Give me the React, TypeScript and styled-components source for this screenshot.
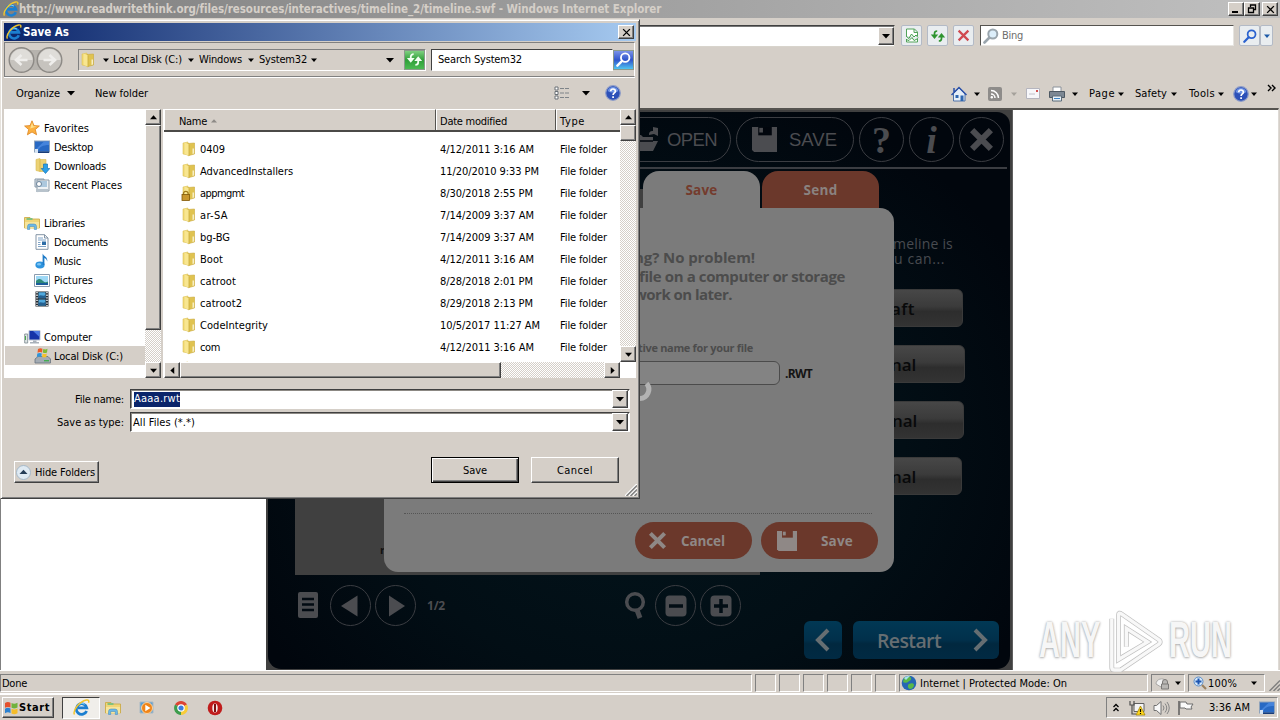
import React, { useLayoutEffect, useRef, useState } from "react";
import styled, { createGlobalStyle, css } from "styled-components";

const FACE = "#d5cfc8";

const GlobalStyle = createGlobalStyle`
  * { box-sizing: border-box; }
  body { margin: 0; overflow: hidden; font: 11px "DejaVu Sans Condensed", "DejaVu Sans", sans-serif; color: #000; }
  svg { display: block; flex: none; }
`;

// Text label that spreads its letters over a fixed width
const LabelBox = styled.span<{ w: number }>`
  display: inline-flex;
  flex: none;
  width: ${p => p.w}px;
  white-space: pre;
`;

const Label: React.FC<{ w: number; children: string }> = ({ w, children }) => {
  const ref = useRef<HTMLSpanElement>(null);
  const [spacing, setSpacing] = useState(0);
  useLayoutEffect(() => {
    if (ref.current) {
      const natural = ref.current.getBoundingClientRect().width - spacing * children.length;
      setSpacing((w - natural) / children.length);
    }
  }, [w, children]);
  return (
    <LabelBox w={w}>
      <span ref={ref} style={{ letterSpacing: spacing }}>{children}</span>
    </LabelBox>
  );
};

// Classic bevels
const raised = css`
  background: ${FACE};
  border: 1px solid;
  border-color: #fff #404040 #404040 #fff;
  box-shadow: inset -1px -1px 0 #808080;
`;

const sunken = css`
  border: 1px solid;
  border-color: #808080 #fff #fff #808080;
`;

const Row = styled.div<{ gap?: number }>`
  display: flex;
  align-items: center;
  gap: ${p => p.gap || 0}px;
`;

const Space = styled.div<{ w?: number; h?: number; grow?: boolean }>`
  flex: ${p => (p.grow ? "1" : "none")};
  width: ${p => p.w || 0}px;
  height: ${p => p.h || 0}px;
`;

const Arrow: React.FC<{ size?: number; color?: string; dir?: string }> = ({ size = 7, color = "#000", dir = "down" }) => {
  const turn: any = { down: 0, left: 90, up: 180, right: 270 };
  return (
    <svg width={size} height={size} viewBox="0 0 8 8">
      <path d="M0 2h8L4 6.5z" fill={color} transform={`rotate(${turn[dir]} 4 4)`} />
    </svg>
  );
};

/* ---------- icons ---------- */

const IeIcon = ({ size = 16 }) => (
  <svg width={size} height={size} viewBox="0 0 16 16">
    <path d="M12.8 11.2A5 5 0 1 1 13 8.4H4.6" fill="none" stroke="#1c7fd0" strokeWidth="2.6" />
    <path d="M5 5.6A4.6 4.6 0 0 1 11 5" fill="none" stroke="#7fd0f7" strokeWidth="1" />
    <path d="M1.4 14.6C-.6 11 6 2.2 12.6 1c2.2-.4 2.6.8 2 2.6" fill="none" stroke="#f2c52c" strokeWidth="1.4" />
  </svg>
);

const FolderIcon = ({ lock = false }) => (
  <svg width="16" height="16" viewBox="0 0 16 16">
    <path d="M2 2l5-1v13l-5-1z" fill="#f0d770" stroke="#dcc25c" strokeWidth=".6" />
    <path d="M7 2.5l6.500-.5v11L7 14.800z" fill="#e0c350" stroke="#c9aa3c" strokeWidth=".6" />
    <path d="M3.500 1.500l4.500 2v11.300l-4.500-2z" fill="#f8e690" />
    <path d="M8 3.500v11.300" stroke="#c8a93a" strokeWidth=".8" />
    <path d="M11.500 7.500H13v5l-1.500.6z" fill="#f7efc4" />
    {lock && <path d="M2.5 10.5V8a2.4 2.4 0 0 1 4.6 0v2.5" fill="none" stroke="#a17a18" strokeWidth="1.3" />}
    {lock && <rect x="1" y="9.5" width="7.5" height="6" fill="#c8962c" stroke="#805808" strokeWidth=".8" />}
  </svg>
);

const StarIcon = () => (
  <svg width="16" height="16" viewBox="0 0 16 16">
    <path d="M8 .8l2 4.8 5.4.4-4.1 3.5 1.3 5.3L8 12l-4.6 2.8 1.3-5.3L.6 6 6 5.6z" fill="#fbb040" stroke="#dd8420" strokeWidth=".8" />
    <path d="M8 2.6l1.3 3.6 3.5.4-6.6 2z" fill="#ffe08a" />
  </svg>
);

const ScreenIcon = () => (
  <svg width="16" height="14" viewBox="0 0 16 14">
    <rect x=".5" y="1" width="15" height="11" fill="#2869c4" stroke="#8fa3bb" />
    <path d="M1 10L10 1.500h5V5C9 5 5 7 4 11z" fill="#4584dc" />
    <path d="M1 11.500h14V13H1z" fill="#183c78" />
    <path d="M1 9h3v4H1z" fill="#d6e4f4" />
  </svg>
);

const DownloadsIcon = () => (
  <svg width="16" height="16" viewBox="0 0 16 16">
    <path d="M2 1.5l4-1v13l-4-1zM6 1.5h6v12H6z" fill="#ecd275" stroke="#d8bb50" strokeWidth=".6" />
    <path d="M9.500 6h4v4.500h2.300L11.500 15.500 7.200 10.500h2.300z" fill="#2ba0e8" stroke="#1473b6" strokeWidth=".7" />
  </svg>
);

const RecentIcon = () => (
  <svg width="16" height="16" viewBox="0 0 16 16">
    <path d="M1 2h9v8H1z" fill="#dce5ec" stroke="#8798a8" />
    <path d="M3 3h12v11l-12 .6z" fill="#eef2f5" stroke="#8b99a5" />
    <path d="M6 5h7M6 7h7M6 9h7" stroke="#6b9ec7" />
    <circle cx="5" cy="7" r="2.500" fill="#fff" stroke="#68829a" />
    <path d="M2 12h12v3H2z" fill="#b8c3cc" />
  </svg>
);

const LibraryIcon = () => (
  <svg width="16" height="16" viewBox="0 0 16 16">
    <path d="M.5 2.500H6l1 1.500h8.500v9H.5z" fill="#f0d678" stroke="#c9a63d" strokeWidth=".8" />
    <path d="M2.500 3h6v2h-6z" fill="#83c07c" />
    <path d="M1 7h14v6.500H1z" fill="#f7e59c" />
    <path d="M3.500 14.500v-3q0-2.500 2.500-2.500h4q2.500 0 2.500 2.500v3h-2.200v-3H5.700v3z" fill="#6db8e6" stroke="#3c87bd" strokeWidth=".5" />
  </svg>
);

const DocumentIcon = () => (
  <svg width="16" height="16" viewBox="0 0 16 16">
    <path d="M2 .7h8.500L14 4v11.300H2z" fill="#fff" stroke="#8394a6" />
    <path d="M4 4h5M4 6h8M4 12.500h8" stroke="#7fa3c7" />
    <path d="M4 8.500h2.500M4 10.500h2.500" stroke="#7fa3c7" />
    <path d="M8 7.500h4v3.500H8z" fill="#2c6ca6" />
    <path d="M10.500.7V4H14" fill="none" stroke="#8394a6" />
  </svg>
);

const MusicIcon = () => (
  <svg width="16" height="16" viewBox="0 0 16 16">
    <ellipse cx="6" cy="12" rx="4.600" ry="3.400" fill="#2e94de" />
    <ellipse cx="5" cy="11.300" rx="2" ry="1.300" fill="#7cc5f4" />
    <path d="M8.600 12V.6c1 3 5.400 2.800 4.600 8C12.600 6 11.600 5.500 10.400 5v7z" fill="#1f7bc8" />
  </svg>
);

const PictureIcon = () => (
  <svg width="16" height="13" viewBox="0 0 16 13">
    <path d="M.5.5h15v12H.5z" fill="#fff" stroke="#8b9caf" />
    <path d="M2 2h12v9H2z" fill="#9ed8f6" />
    <path d="M2 7c3-3 5-2 7 0s4 1 5 .5V9H2z" fill="#2f8a78" />
    <path d="M2 9h12v2H2z" fill="#1c5d9c" />
  </svg>
);

const VideoIcon = () => (
  <svg width="16" height="16" viewBox="0 0 16 16">
    <path d="M1.500.5h13v15h-13z" fill="#242a30" />
    <path d="M4.500 1.200h7v6h-7zM4.500 8.500h7v6h-7z" fill="#4fa8dc" />
    <path d="M4.500 5c3-2 4 1 7-1v3.200h-7zM4.500 12c3-2 4 1 7-1v3.500h-7z" fill="#246090" />
    <path d="M3 1v14M13 1v14" stroke="#fff" strokeWidth="1.400" strokeDasharray="1.300 1.300" />
  </svg>
);

const ComputerIcon = () => (
  <svg width="17" height="16" viewBox="0 0 17 16">
    <path d="M.7 5h3v9h-3z" fill="#dfe5e5" stroke="#77858c" strokeWidth=".8" />
    <path d="M1.500 7v4" stroke="#49a84e" />
    <path d="M5 1.500h11v9.500H5z" fill="#1533a8" stroke="#bac4d3" />
    <path d="M9 2h6.500v6z" fill="#4c79e4" />
    <path d="M9 11.500h3.500V13H15v1.500H6V13h3z" fill="#a9b1ba" />
  </svg>
);

const DiskIcon = () => (
  <svg width="17" height="16" viewBox="0 0 17 16">
    <path d="M1 11l3-2.500h10l2.500 2.500v4H1z" fill="#a3abb3" stroke="#68727d" strokeWidth=".8" />
    <path d="M10 12.700h5" stroke="#42ad52" strokeWidth="1.400" />
    <path d="M4 1c2-1.200 3-1 4.500-.2L8 4.500c-1.400-.8-2.600-.7-4.500.2z" fill="#ea5b28" />
    <path d="M9.300 1c1.600.7 2.600.6 4.200-.2L13 4.500c-1.500.7-2.700.7-4.200 0z" fill="#7fba36" />
    <path d="M3.300 5.500c1.700-.8 3-.8 4.500 0L7.300 9c-1.500-.6-2.800-.6-4.500.1z" fill="#2f94d8" />
    <path d="M8.600 5.500c1.500.7 2.700.7 4.200 0l-.5 3.600c-1.400.6-2.700.6-4.200 0z" fill="#f6c02a" />
  </svg>
);

const HelpIcon = ({ size = 16 }) => (
  <svg width={size} height={size} viewBox="0 0 16 16">
    <circle cx="8" cy="8" r="7.300" fill="#2c50b8" stroke="#8d9cc8" strokeWidth="1.200" />
    <path d="M2.600 6a5.600 5.600 0 0 1 10.800 0C10 8 6 8 2.600 6z" fill="#6f94e4" />
    <path d="M5.700 6.200c.2-3 4.800-2.800 4.700 0C10.300 8 8.100 7.900 8.100 10M8.100 11.300v1.600" fill="none" stroke="#fff" strokeWidth="1.700" />
  </svg>
);

const LensIcon: React.FC<{ size?: number; color: string; glass?: string }> = ({ size = 16, color, glass = "none" }) => (
  <svg width={size} height={size} viewBox="0 0 16 16">
    <path d="M1.500 14.500L6.500 9.500" stroke={color} strokeWidth="2.600" strokeLinecap="round" />
    <circle cx="9.800" cy="6" r="4.500" fill={glass} stroke={color} strokeWidth="2" />
  </svg>
);

const SwapArrows = ({ size = 16, color = "#2f9430" }) => (
  <svg width={size} height={size} viewBox="0 0 16 16">
    <path d="M.8 6.500h7.400L4.500 11z" fill={color} />
    <path d="M4.500 7.500V5.500C4.500 4 5.500 3 7.200 3" fill="none" stroke={color} strokeWidth="1.700" />
    <path d="M7.800 9.500h7.400L11.500 5z" fill={color} />
    <path d="M11.500 8.500v2c0 1.500-1 2.500-2.700 2.500" fill="none" stroke={color} strokeWidth="1.700" />
  </svg>
);

const TornPage = () => (
  <svg width="14" height="15" viewBox="0 0 14 15">
    <path d="M1.500 8V1h8l3 3v4M1.500 11v3h11v-3M9 1v3.500h3.500" fill="#fff" stroke="#52a35a" />
    <path d="M1 8l3 2.500L6.500 6 9 9l2-2 2 2.500M1 11.500l3 1 3-3 2 3 4-2" fill="none" stroke="#41a04c" />
  </svg>
);

const FloppyIcon: React.FC<{ size: number; color: string; hole: string }> = ({ size, color, hole }) => (
  <svg width={size} height={size} viewBox="0 0 24 24">
    <path d="M0 0h24v24H2l-2-2z" fill={color} />
    <path d="M6 0h13v8H6z" fill={hole} />
    <path d="M7 .8h3.500v4.500H7z" fill={color} />
  </svg>
);

const CrossIcon: React.FC<{ size: number; color: string; width: number }> = ({ size, color, width }) => (
  <svg width={size} height={size} viewBox="0 0 20 20">
    <path d="M2.500 2.500l15 15M17.500 2.500l-15 15" stroke={color} strokeWidth={width} />
  </svg>
);

/* ---------- browser window ---------- */

const Desktop = styled.div`
  position: relative;
  display: flex;
  flex-direction: column;
  width: 1280px;
  height: 720px;
  overflow: hidden;
  background: ${FACE};
`;

const BrowserTitle = styled(Row)`
  height: 18px;
  padding: 0 2px 0 3px;
  background: linear-gradient(90deg, #808080, #c0c0c0);
  color: ${FACE};
  font: bold 11.5px "DejaVu Sans Condensed", "DejaVu Sans", sans-serif;
`;

const CaptionButton = styled.div`
  ${raised}
  width: 16px;
  height: 14px;
  display: flex;
  align-items: center;
  justify-content: center;
`;

const NavBar = styled(Row)`
  height: 35px;
`;

const AddressBox = styled.div`
  display: flex;
  flex: none;
  justify-content: flex-end;
  width: 895px;
  height: 22px;
  background: #fff;
  border: 1px solid;
  border-color: #404040 #d8d4cc #d8d4cc #808080;
  box-shadow: inset 0 1px 0 #777;
  padding: 1px 0;
`;

const DropButton = styled.div`
  ${raised}
  width: 16px;
  display: flex;
  align-items: center;
  justify-content: center;
`;

const ToolButton = styled.div<{ w: number }>`
  flex: none;
  width: ${p => p.w}px;
  height: 21px;
  display: flex;
  align-items: center;
  justify-content: center;
  background: #e9edf0;
  border: 1px solid #b3bac6;
  border-radius: 2px;
`;

const BingBox = styled(Row)`
  flex: none;
  width: 254px;
  height: 21px;
  padding-left: 2px;
  background: #fff;
  color: #6d6d6d;
  border: 1px solid;
  border-color: #55534f #e6e4e0 #e6e4e0 #55534f;
`;

const CommandBar = styled(Row)`
  height: 55px;
  padding: 26px 3px 0 951px;
`;

const PageArea = styled.div`
  height: 562px;
  margin-right: 1px;
  padding-left: 265px;
  background: #fff;
  border-top: 2px solid #55534f;
  border-left: 1px solid #808080;
  border-right: 1px solid #dedad5;
`;

const StatusBar = styled.div`
  display: flex;
  gap: 3px;
  height: 24px;
  padding: 3px 0 1px;
  border-top: 1px solid #fff;
  border-bottom: 1px solid #fff;
`;

const StatusCell = styled.div<{ w: number }>`
  ${sunken}
  display: flex;
  align-items: center;
  width: ${p => p.w}px;
  padding-left: 1px;
  overflow: hidden;
`;

const Taskbar = styled(Row)`
  height: 26px;
  padding: 0 2px;
  border-top: 1px solid #fff;
`;

const StartButton = styled(Row)`
  ${raised}
  width: 52px;
  height: 21px;
  padding-left: 1px;
  font-weight: bold;
`;

const ActiveTask = styled.div`
  display: flex;
  align-items: center;
  justify-content: center;
  width: 38px;
  height: 22px;
  background: #f0eeea;
  border: 1px solid;
  border-color: #404040 #fff #fff #404040;
`;

const Tray = styled(Row)`
  ${sunken}
  width: 172px;
  height: 21px;
  padding-left: 5px;
`;

/* ---------- timeline app inside the page ---------- */

const LINE = "#3b3d42";

const Stage = styled.div`
  position: relative;
  width: 747px;
  height: 560px;
  padding: 2px 2px 1px;
  background: #404040;
  border-right: 1px solid #5e5e5e;
`;

const AppBody = styled.div`
  display: flex;
  flex-direction: column;
  height: 557px;
  border-radius: 13px;
  background: radial-gradient(ellipse 480px 420px at 50% 60%, #03151c 0%, #020e15 55%, #01060d 90%);
`;

const AppHeader = styled(Row)`
  justify-content: flex-end;
  gap: 5px;
  height: 57px;
  margin-right: 3px;
  padding: 0 3px 0 0;
  border-bottom: 2px solid ${LINE};
  color: #4b4c50;
  font: 18.5px "Liberation Sans", sans-serif;
`;

const Pill = styled(Row)<{ w: number }>`
  width: ${p => p.w}px;
  height: 45px;
  border: 1.5px solid ${LINE};
  border-radius: 23px;
`;

const Round = styled.div<{ size: number }>`
  display: flex;
  flex: none;
  align-items: center;
  justify-content: center;
  width: ${p => p.size}px;
  height: ${p => p.size}px;
  border: 1.5px solid ${LINE};
  border-radius: 50%;
  color: #4b4c50;
  font: bold 38px "Liberation Serif", serif;
`;

const Workspace = styled.div`
  display: flex;
  justify-content: space-between;
  flex: 1;
  padding: 20px 45px 0 27px;
`;

const Preview = styled.div`
  display: flex;
  align-items: flex-end;
  width: 465px;
  padding: 0 0 18px 85px;
  background: #404040;
  color: #111;
  font: bold 11px "Open Sans", sans-serif;
`;

const SidePanel = styled.div`
  display: flex;
  flex-direction: column;
  width: 170px;
  padding-top: 47px;
  color: #484b50;
  font: 14px/15px "Open Sans", sans-serif;
`;

const SideLine = styled.div<{ end: number }>`
  display: flex;
  justify-content: flex-end;
  padding-right: ${p => p.end}px;
`;

const Choice = styled.div<{ end: number; pad: number }>`
  display: flex;
  align-items: center;
  justify-content: flex-end;
  height: 38px;
  margin: 0 ${p => p.end}px 18px 0;
  padding-right: ${p => p.pad}px;
  border-radius: 6px;
  background: linear-gradient(#474747, #3b3b3b 45%, #2d2d2d 60%, #333);
  border: 1px solid #3a3a3a;
  color: #08090a;
  font: 600 17px "Open Sans", sans-serif;
`;

const AppFooter = styled.div`
  display: flex;
  align-items: flex-start;
  height: 94px;
  padding: 10px 11px 0 29px;
  color: #4b4c50;
`;

const PageCount = styled.div`
  padding-top: 12px;
  font: bold 12px "Open Sans", sans-serif;
`;

const BlueButton = styled.div<{ w: number }>`
  display: flex;
  align-items: center;
  width: ${p => p.w}px;
  height: 38px;
  margin-top: 36px;
  border-radius: 6px;
  background: linear-gradient(#013854, #01304b 50%, #01283f 60%, #012a43);
  color: #666e72;
  font: 600 19.5px "Open Sans", sans-serif;
`;

const Tabs = styled.div`
  position: absolute;
  left: 377px;
  top: 61px;
  display: flex;
  gap: 2px;
`;

const Tab = styled.div<{ active?: boolean }>`
  display: flex;
  align-items: center;
  justify-content: center;
  width: 117px;
  height: 38px;
  border-radius: 16px 16px 0 0;
  background: ${p => (p.active ? "#7b7b7b" : "#6b382b")};
  color: ${p => (p.active ? "#743b2d" : "#8a8280")};
  font: bold 13.5px "Open Sans", sans-serif;
`;

const Modal = styled.div`
  position: absolute;
  left: 118px;
  top: 98px;
  width: 510px;
  height: 364px;
  padding-top: 40px;
  border-radius: 14px;
  background: #7b7b7b;
  color: #4c4c4c;
  font: bold 15px "Open Sans", sans-serif;
`;

const ModalLine = styled.div<{ end: number }>`
  display: flex;
  align-items: center;
  justify-content: flex-end;
  height: 18.5px;
  padding-right: ${p => p.end}px;
`;

const FileHint = styled.div`
  display: flex;
  align-items: center;
  justify-content: flex-end;
  height: 21px;
  margin: 34px 0 2.5px;
  padding: 0 141px 1px 0;
  font-size: 11px;
`;

const NameField = styled(Row)`
  gap: 5px;
  margin-left: 140px;
  height: 24px;
  color: #141414;
  font: bold 12px "Open Sans", sans-serif;
`;

const NameInput = styled.div`
  width: 256px;
  height: 24px;
  background: #838383;
  border: 1.5px solid #4b4b4b;
  border-radius: 6px;
`;

const DottedRule = styled.div`
  margin: 128px 22px 8px 20px;
  border-top: 1.5px dotted #555;
`;

const ModalButtons = styled(Row)`
  justify-content: flex-end;
  gap: 9px;
  padding-right: 16px;
`;

const OrangeButton = styled(Row)`
  width: 117px;
  height: 37px;
  border-radius: 19px;
  background: #6b382b;
  color: #8f8886;
  font: bold 13.5px "Open Sans", sans-serif;
`;

const Spinner = styled.svg`
  position: absolute;
  left: 360px;
  top: 266px;
`;

/* ---------- save dialog ---------- */

const Dialog = styled.div`
  position: absolute;
  left: 0;
  top: 19px;
  width: 640px;
  height: 480px;
  padding: 3px 3px 0;
  background: ${FACE};
  border: 1px solid;
  border-color: #e6e2dc #404040 #404040 #e6e2dc;
  box-shadow: inset 1px 1px 0 #fff, inset -1px -1px 0 #808080;
`;

const DialogTitle = styled(Row)`
  height: 18px;
  padding: 0 2px;
  background: linear-gradient(90deg, #0a246a, #a6caf0);
  color: #fff;
  font-weight: bold;
  font-size: 11.5px;
`;

const DialogNav = styled(Row)`
  height: 35px;
  margin: 1px 1px 0 0;
  padding: 0 0 0 3px;
  border: 1px solid;
  border-color: #808080 #fff #808080 #808080;
  box-shadow: 0 1px 0 #fff;
`;

const Crumbs = styled(Row)`
  ${sunken}
  flex: none;
  width: 348px;
  height: 22px;
  padding-left: 1px;
`;

const SearchField = styled(Row)`
  flex: none;
  width: 182px;
  height: 22px;
  padding-left: 6px;
  background: #fff;
  border: 1px solid;
  border-color: #404040 #fff #fff #404040;
`;

const GlossButton = styled.div<{ color: string }>`
  flex: none;
  display: flex;
  align-items: center;
  justify-content: center;
  width: 21px;
  height: 20px;
  border: 1px solid #8a9a8a;
  background: ${p => p.color};
`;

const DialogTools = styled(Row)`
  height: 32px;
  padding-left: 12px;
`;

const Explorer = styled.div`
  display: flex;
  height: 269px;
`;

const Tree = styled.div`
  width: 141px;
  padding-top: 9px;
  background: #fff;
`;

const TreeItem = styled(Row)<{ depth: number; selected?: boolean }>`
  height: 19px;
  margin-left: 1px;
  padding-top: 1px;
  padding-left: ${p => (p.depth ? 29 : 19)}px;
  gap: ${p => (p.depth ? 4 : 4)}px;
  background: ${p => (p.selected ? FACE : "transparent")};
`;

const IconSlot = styled.div`
  display: flex;
  justify-content: center;
  width: 16px;
`;

const checker = css`
  background: repeating-conic-gradient(#d5cfc8 0 25%, #fff 0 50%) 0 0 / 2px 2px;
`;

const VScroll = styled.div`
  ${checker}
  display: flex;
  flex-direction: column;
  justify-content: space-between;
  width: 16px;
`;

const HScroll = styled.div`
  ${checker}
  display: flex;
  justify-content: space-between;
  height: 16px;
  width: 456px;
`;

const ScrollBox = styled.div<{ w?: number; h?: number }>`
  ${raised}
  display: flex;
  flex: none;
  align-items: center;
  justify-content: center;
  width: ${p => p.w || 16}px;
  height: ${p => p.h || 16}px;
`;

const Splitter = styled.div`
  width: 3px;
  border-right: 1px solid #fff;
`;

const ListPane = styled.div`
  width: 472px;
  background: #fff;
`;

const ListTop = styled.div`
  display: flex;
  height: 253px;
`;

const ListTable = styled.div`
  width: 456px;
  overflow: hidden;
`;

const ListHeader = styled.div`
  display: flex;
  height: 23px;
  margin-bottom: 6px;
  background: ${FACE};
  border-bottom: 2px solid #4b4a47;
`;

const HeaderCell = styled(Row)<{ w: number; pad: number }>`
  flex: none;
  width: ${p => p.w}px;
  padding-top: 2px;
  padding-left: ${p => p.pad}px;
  border-top: 1px solid #fff;
  border-left: 1px solid #fff;
  border-right: 1px solid #55534f;
`;

const FileRow = styled(Row)`
  height: 22px;
  padding-left: 17px;
`;

const NameCell = styled(Row)`
  gap: 3px;
  width: 259px;
`;

const DateCell = styled.div`
  width: 120px;
`;

const FieldRow = styled(Row)`
  justify-content: flex-end;
  height: 20px;
  margin: 0 6px 3px 0;
`;

const ComboBox = styled.div<{ pad: number }>`
  display: flex;
  flex: none;
  align-items: center;
  justify-content: space-between;
  width: 500px;
  height: 20px;
  padding-left: ${p => p.pad}px;
  padding-right: 1px;
  background: #fff;
  border: 1px solid;
  border-color: #404040 #fff #fff #404040;
  box-shadow: inset 1px 1px 0 #8c8984;
`;

const ComboDrop = styled(DropButton)`
  height: 18px;
`;

const Selection = styled.div`
  height: 15px;
  line-height: 14px;
  background: #0a246a;
  color: #fff;
`;

const DialogFooter = styled(Row)`
  align-items: flex-start;
  padding: 22px 17px 0 10px;
`;

const HideButton = styled(Row)`
  ${raised}
  width: 85px;
  height: 22px;
  margin-top: 4px;
  padding-left: 1px;
  gap: 4px;
`;

const DialogButton = styled.div<{ primary?: boolean }>`
  ${raised}
  display: flex;
  align-items: center;
  justify-content: center;
  width: 88px;
  height: 26px;
  ${p => p.primary && css`
    border-color: #000;
    box-shadow: inset 1px 1px 0 #fff, inset -1px -1px 0 #404040, inset -2px -2px 0 #808080;
  `}
`;

const Grip = styled.svg`
  position: absolute;
  right: 2px;
  bottom: 2px;
`;

const Watermark = styled.div`
  position: absolute;
  left: 1039px;
  top: 609px;
  display: flex;
  align-items: center;
  height: 63px;
  opacity: 0.9;
`;

const MarkText = styled.div`
  width: 67px;
  color: #f6f6f6;
  font: bold 50px/63px "Liberation Sans", sans-serif;
  text-shadow: 0 0 3px #9a9a9a, 0 1px 3px #bbb;

  span {
    display: inline-block;
    transform: scaleX(0.58);
    transform-origin: 0 50%;
  }
`;

/* ---------- data ---------- */

const treeItems: any[] = [
  { name: "Favorites", w: 45, icon: <StarIcon />, depth: 0 },
  { name: "Desktop", w: 39, icon: <ScreenIcon />, depth: 1 },
  { name: "Downloads", w: 52, icon: <DownloadsIcon />, depth: 1 },
  { name: "Recent Places", w: 68, icon: <RecentIcon />, depth: 1 },
  null,
  { name: "Libraries", w: 41, icon: <LibraryIcon />, depth: 0 },
  { name: "Documents", w: 54, icon: <DocumentIcon />, depth: 1 },
  { name: "Music", w: 27, icon: <MusicIcon />, depth: 1 },
  { name: "Pictures", w: 39, icon: <PictureIcon />, depth: 1 },
  { name: "Videos", w: 32, icon: <VideoIcon />, depth: 1 },
  null,
  { name: "Computer", w: 48, icon: <ComputerIcon />, depth: 0 },
  { name: "Local Disk (C:)", w: 69, icon: <DiskIcon />, depth: 1, selected: true },
];

const files = [
  { name: "0409", w: 25, date: "4/12/2011 3:16 AM", dw: 94 },
  { name: "AdvancedInstallers", w: 93, date: "11/20/2010 9:33 PM", dw: 99 },
  { name: "appmgmt", w: 44, date: "8/30/2018 2:55 PM", dw: 93, lock: true },
  { name: "ar-SA", w: 28, date: "7/14/2009 3:37 AM", dw: 94 },
  { name: "bg-BG", w: 30, date: "7/14/2009 3:37 AM", dw: 94 },
  { name: "Boot", w: 23, date: "4/12/2011 3:16 AM", dw: 94 },
  { name: "catroot", w: 36, date: "8/28/2018 2:01 PM", dw: 93 },
  { name: "catroot2", w: 42, date: "8/29/2018 2:13 PM", dw: 93 },
  { name: "CodeIntegrity", w: 68, date: "10/5/2017 11:27 AM", dw: 100 },
  { name: "com", w: 20, date: "4/12/2011 3:16 AM", dw: 94 },
];

const choices = [
  { text: "aft", w: 24, end: 2, pad: 47 },
  { text: "nal", w: 25, end: 0, pad: 48 },
  { text: "nal", w: 25, end: 1, pad: 46 },
  { text: "nal", w: 25, end: 3, pad: 45 },
];

/* ---------- parts ---------- */

const TimelineApp = () => (
  <Stage>
    <AppBody>
      <AppHeader>
        <Pill w={117}>
          <Space w={20} />
          <svg width="24" height="26" viewBox="0 0 24 26">
            <path d="M0 24V8h6l2 2h10v4h5l-5 10z" fill="#4b4c50" />
            <path d="M3 14h15" stroke="#01060d" strokeWidth="1.500" />
            <path d="M14 8c0-3 1-4 4-4V0l5 1v8l-4-2z" fill="#4b4c50" />
          </svg>
          <Space w={8} />
          <Label w={50}>OPEN</Label>
        </Pill>
        <Pill w={118}>
          <Space w={15} />
          <FloppyIcon size={25} color="#4b4c50" hole="#01060d" />
          <Space w={12} />
          <Label w={48}>SAVE</Label>
        </Pill>
        <Round size={45}>?</Round>
        <Round size={45}><i>i</i></Round>
        <Round size={45}><CrossIcon size={25} color="#4b4c50" width={4.8} /></Round>
      </AppHeader>
      <Workspace>
        <Preview>r</Preview>
        <SidePanel>
          <SideLine end={12}><Label w={60}>meline is</Label></SideLine>
          <SideLine end={20}><Label w={51}>u can...</Label></SideLine>
          <Space h={23} />
          {choices.map((item, i) => (
            <Choice key={i} end={item.end} pad={item.pad}>
              <Label w={item.w}>{item.text}</Label>
            </Choice>
          ))}
        </SidePanel>
      </Workspace>
      <AppFooter>
        <svg width="22" height="40" viewBox="0 0 22 40">
          <rect x="1" y="7" width="20" height="26" rx="2" fill="#4b4c50" />
          <path d="M5 14h12M5 19.500h12M5 25h12" stroke="#020a12" strokeWidth="2.300" />
        </svg>
        <Space w={11} />
        <Round size={41}>
          <svg width="20" height="24" viewBox="0 0 20 24"><path d="M0 12L16.500 1.500v21z" fill="#4b4c50" /></svg>
        </Round>
        <Space w={4} />
        <Round size={41}>
          <svg width="20" height="24" viewBox="0 0 20 24"><path d="M19 12L3 1.500v21z" fill="#4b4c50" /></svg>
        </Round>
        <Space w={11} />
        <PageCount><Label w={18}>1/2</Label></PageCount>
        <Space w={179} />
        <svg width="22" height="40" viewBox="0 0 22 40">
          <circle cx="11" cy="17" r="8.300" fill="none" stroke="#4b4c50" strokeWidth="3.500" />
          <path d="M13 25l3 8" stroke="#4b4c50" strokeWidth="5" />
        </svg>
        <Space w={9} />
        <Round size={41}>
          <svg width="22" height="22" viewBox="0 0 22 22">
            <rect x=".5" y=".5" width="21" height="21" rx="4" fill="#4b4c50" />
            <path d="M4 11h14" stroke="#020d14" strokeWidth="3.500" />
          </svg>
        </Round>
        <Space w={4} />
        <Round size={41}>
          <svg width="22" height="22" viewBox="0 0 22 22">
            <rect x=".5" y=".5" width="21" height="21" rx="4" fill="#4b4c50" />
            <path d="M4 11h14M11 4v14" stroke="#020d14" strokeWidth="3.500" />
          </svg>
        </Round>
        <Space grow />
        <BlueButton w={38}>
          <Space w={10} />
          <svg width="18" height="24" viewBox="0 0 18 24"><path d="M14 2L4 12l10 10" fill="none" stroke="#666e72" strokeWidth="4" /></svg>
        </BlueButton>
        <Space w={11} />
        <BlueButton w={146}>
          <Space w={24} />
          <Label w={64}>Restart</Label>
          <Space w={31} />
          <svg width="18" height="24" viewBox="0 0 18 24"><path d="M3 2l10 10L3 22" fill="none" stroke="#666e72" strokeWidth="4" /></svg>
        </BlueButton>
      </AppFooter>
    </AppBody>
    <Tabs>
      <Tab active><Label w={32}>Save</Label></Tab>
      <Tab><Label w={34}>Send</Label></Tab>
    </Tabs>
    <Modal>
      <ModalLine end={139}><Label w={121}>ng? No problem!</Label></ModalLine>
      <ModalLine end={49}><Label w={206}>file on a computer or storage</Label></ModalLine>
      <ModalLine end={162}><Label w={98}>work on later.</Label></ModalLine>
      <FileHint><Label w={115}>tive name for your file</Label></FileHint>
      <NameField>
        <NameInput />
        <Label w={27}>.RWT</Label>
      </NameField>
      <DottedRule />
      <ModalButtons>
        <OrangeButton>
          <Space w={13} />
          <CrossIcon size={19} color="#8f8886" width={4.2} />
          <Space w={14} />
          <Label w={44}>Cancel</Label>
        </OrangeButton>
        <OrangeButton>
          <Space w={16} />
          <FloppyIcon size={20} color="#8f8886" hole="#6b382b" />
          <Space w={24} />
          <Label w={32}>Save</Label>
        </OrangeButton>
      </ModalButtons>
    </Modal>
    <Spinner width="28" height="28" viewBox="0 0 28 28">
      <path d="M20.500 7.500A9 9 0 0 1 14 22.500" fill="none" stroke="#b3b3b3" strokeWidth="5" />
    </Spinner>
  </Stage>
);

const SaveDialog = () => (
  <Dialog>
    <DialogTitle>
      <IeIcon />
      <Space w={1} />
      <Label w={46}>Save As</Label>
      <Space grow />
      <CaptionButton><CrossIcon size={9} color="#000" width={3} /></CaptionButton>
    </DialogTitle>
    <DialogNav>
      <svg width="56" height="28" viewBox="0 0 56 28">
        <path d="M13 4h29v20H13z" fill="#b6b3ae" />
        <circle cx="13.500" cy="14" r="12.300" fill="#c6c3be" stroke="#8d8a86" strokeWidth="1.400" />
        <circle cx="41.500" cy="14" r="12.300" fill="#c6c3be" stroke="#8d8a86" strokeWidth="1.400" />
        <path d="M2.500 14a11 11 0 0 1 22 0zM30.500 14a11 11 0 0 1 22 0z" fill="#dfddd9" />
        <path d="M19.500 14H8.500M13.500 9L8 14l5.500 5M35.500 14h11M41.500 9l5.500 5-5.500 5" fill="none" stroke="#efeeec" strokeWidth="2.600" />
      </svg>
      <Space w={14} />
      <Crumbs>
        <FolderIcon />
        <Space w={7} />
        <Arrow size={6} /><Space w={4} />
        <Label w={69}>Local Disk (C:)</Label>
        <Space w={6} /><Arrow size={6} /><Space w={5} />
        <Label w={43}>Windows</Label>
        <Space w={6} /><Arrow size={6} /><Space w={5} />
        <Label w={48}>System32</Label>
        <Space w={4} /><Arrow size={6} />
        <Space grow />
        <Arrow size={8} />
        <Space w={10} />
        <GlossButton color="linear-gradient(#7fd080, #2f9f38 50%, #4cbb52)"><SwapArrows size={17} color="#f2fff2" /></GlossButton>
      </Crumbs>
      <Space w={5} />
      <SearchField><Label w={84}>Search System32</Label></SearchField>
      <GlossButton color="linear-gradient(#7a92e8, #2f55cc 50%, #4fc4f0)"><LensIcon size={15} color="#fff" /></GlossButton>
    </DialogNav>
    <DialogTools>
      <Label w={44}>Organize</Label>
      <Space w={7} /><Arrow size={8} />
      <Space w={20} />
      <Label w={53}>New folder</Label>
      <Space w={406} />
      <svg width="16" height="14" viewBox="0 0 16 14">
        <path d="M1 1h3v3H1zM1 5.500h3v3H1zM1 10h3v3H1z" fill="#fff" stroke="#6a7077" />
        <path d="M6 2.500h10M6 7h10M6 11.500h10" stroke="#7e8489" strokeDasharray="4 1" />
      </svg>
      <Space w={12} /><Arrow size={8} />
      <Space w={15} />
      <HelpIcon size={16} />
    </DialogTools>
    <Explorer>
      <Tree>
        {treeItems.map((item, i) =>
          item ? (
            <TreeItem key={i} depth={item.depth} selected={item.selected}>
              <IconSlot>{item.icon}</IconSlot>
              <Label w={item.w}>{item.name}</Label>
            </TreeItem>
          ) : (
            <TreeItem key={i} depth={0} />
          )
        )}
      </Tree>
      <VScroll>
        <div>
          <ScrollBox><Arrow dir="up" /></ScrollBox>
          <ScrollBox h={205} />
        </div>
        <ScrollBox><Arrow /></ScrollBox>
      </VScroll>
      <Splitter />
      <ListPane>
        <ListTop>
          <ListTable>
            <ListHeader>
              <HeaderCell w={272} pad={14}>
                <Label w={28}>Name</Label>
                <Space w={4} />
                <Arrow size={6} dir="up" color="#8d8a86" />
              </HeaderCell>
              <HeaderCell w={120} pad={3}><Label w={67}>Date modified</Label></HeaderCell>
              <HeaderCell w={90} pad={3}><Label w={25}>Type</Label></HeaderCell>
            </ListHeader>
            {files.map(file => (
              <FileRow key={file.name}>
                <NameCell>
                  <FolderIcon lock={file.lock} />
                  <Label w={file.w}>{file.name}</Label>
                </NameCell>
                <DateCell><Label w={file.dw}>{file.date}</Label></DateCell>
                <Label w={47}>File folder</Label>
              </FileRow>
            ))}
            <FileRow><FolderIcon /></FileRow>
          </ListTable>
          <VScroll>
            <div>
              <ScrollBox><Arrow dir="up" /></ScrollBox>
              <ScrollBox />
            </div>
            <ScrollBox><Arrow /></ScrollBox>
          </VScroll>
        </ListTop>
        <HScroll>
          <Row>
            <ScrollBox><Arrow dir="left" /></ScrollBox>
            <ScrollBox w={321} />
          </Row>
          <ScrollBox><Arrow dir="right" /></ScrollBox>
        </HScroll>
      </ListPane>
    </Explorer>
    <Space h={11} />
    <FieldRow>
      <Label w={49}>File name:</Label>
      <Space w={6} />
      <ComboBox pad={3}>
        <Selection><Label w={46}>Aaaa.rwt</Label></Selection>
        <ComboDrop><Arrow size={8} /></ComboDrop>
      </ComboBox>
    </FieldRow>
    <FieldRow>
      <Label w={67}>Save as type:</Label>
      <Space w={6} />
      <ComboBox pad={2}>
        <Label w={62}>All Files (*.*)</Label>
        <ComboDrop><Arrow size={8} /></ComboDrop>
      </ComboBox>
    </FieldRow>
    <DialogFooter>
      <HideButton>
        <svg width="15" height="15" viewBox="0 0 15 15">
          <circle cx="7.500" cy="7.500" r="7" fill="#dfeaf3" stroke="#a5b8c8" />
          <path d="M3.500 9L7.500 4.800 11.500 9z" fill="#243d57" />
        </svg>
        <Label w={60}>Hide Folders</Label>
      </HideButton>
      <Space grow />
      <DialogButton primary><Label w={24}>Save</Label></DialogButton>
      <Space w={12} />
      <DialogButton><Label w={36}>Cancel</Label></DialogButton>
    </DialogFooter>
    <Grip width="12" height="12" viewBox="0 0 12 12">
      <path d="M0 12L12 0M4 12L12 4M8 12L12 8" stroke="#fff" strokeWidth="1.500" />
      <path d="M1.500 12L12 1.500M5.500 12L12 5.500M9.500 12L12 9.500" stroke="#808080" strokeWidth="1.500" />
    </Grip>
  </Dialog>
);

const App: React.FC = () => (
  <Desktop>
    <GlobalStyle />
    <BrowserTitle>
      <IeIcon />
      <Label w={642}>http://www.readwritethink.org/files/resources/interactives/timeline_2/timeline.swf - Windows Internet Explorer</Label>
      <Space grow />
      <CaptionButton><svg width="8" height="8"><path d="M0 7h6" stroke="#000" strokeWidth="2" /></svg></CaptionButton>
      <CaptionButton>
        <svg width="10" height="10"><path d="M3.500 3V1h5v4.500H7M1.500 4h5v4.500h-5z" fill="none" stroke="#000" strokeWidth="1.300" /></svg>
      </CaptionButton>
      <Space w={2} />
      <CaptionButton><CrossIcon size={9} color="#000" width={3} /></CaptionButton>
    </BrowserTitle>
    <NavBar>
      <AddressBox><DropButton><Arrow size={8} /></DropButton></AddressBox>
      <Space w={6} />
      <ToolButton w={21}><TornPage /></ToolButton>
      <Space w={5} />
      <ToolButton w={21}><SwapArrows /></ToolButton>
      <Space w={5} />
      <ToolButton w={21}><CrossIcon size={13} color="#d04a50" width={3.4} /></ToolButton>
      <Space w={6} />
      <BingBox>
        <LensIcon size={16} color="#9aa5ad" glass="#dceefa" />
        <Space w={3} />
        <Label w={21}>Bing</Label>
      </BingBox>
      <Space w={5} />
      <ToolButton w={21}><LensIcon size={14} color="#2b62cf" /></ToolButton>
      <ToolButton w={13}><Arrow size={6} color="#1d5aa8" /></ToolButton>
    </NavBar>
    <CommandBar>
      <svg width="16" height="16" viewBox="0 0 16 16">
        <path d="M2.500 7.500L8 2l6 6v7H2.500z" fill="#e5eef8" stroke="#5072a8" />
        <path d="M.5 9L8 1.500 15.500 9M3 2v4" fill="none" stroke="#2950a8" strokeWidth="1.500" />
        <path d="M4.500 9h3v3h-3zM9.500 9.500h3V15h-3z" fill="#2e66b0" />
      </svg>
      <Space w={7} /><Arrow size={6} /><Space w={8} />
      <svg width="14" height="14" viewBox="0 0 14 14">
        <rect width="14" height="14" rx="2" fill="#8e8c8a" />
        <path d="M3 7a4 4 0 0 1 4 4M3 3.500A7.500 7.500 0 0 1 10.500 11" fill="none" stroke="#fff" strokeWidth="1.500" />
        <circle cx="3.800" cy="10.300" r="1.200" fill="#fff" />
      </svg>
      <Space w={9} /><Arrow size={6} color="#a5a19b" /><Space w={9} />
      <svg width="14" height="11" viewBox="0 0 14 11">
        <path d="M.5.5h13v10H.5z" fill="#f7f7fa" stroke="#b5b5be" />
        <path d="M10 2h2v2h-2z" fill="#d05050" />
        <path d="M3 6h6" stroke="#c0c0ca" />
      </svg>
      <Space w={9} />
      <svg width="16" height="16" viewBox="0 0 16 16">
        <path d="M4 1h8v5H4z" fill="#fff" stroke="#8a919a" />
        <path d="M.5 5.500h15v6H.5z" fill="#7c8793" stroke="#4d5863" />
        <path d="M3.500 10h9v5h-9z" fill="#e8f1f8" stroke="#5a6a78" />
        <path d="M5 12.500h6" stroke="#3e83c4" />
      </svg>
      <Space w={7} /><Arrow size={6} /><Space w={11} />
      <Label w={26}>Page</Label>
      <Space w={3} /><Arrow size={6} /><Space w={11} />
      <Label w={32}>Safety</Label>
      <Space w={4} /><Arrow size={6} /><Space w={12} />
      <Label w={26}>Tools</Label>
      <Space w={3} /><Arrow size={6} /><Space w={9} />
      <HelpIcon size={16} />
      <Space w={2} /><Arrow size={6} /><Space w={10} />
      <svg width="10" height="20" viewBox="0 0 10 20">
        <path d="M1 1l3 3-3 3M5 1l3 3-3 3" fill="none" stroke="#000" strokeWidth="1.400" />
      </svg>
    </CommandBar>
    <PageArea><TimelineApp /></PageArea>
    <StatusBar>
      <StatusCell w={752}><Label w={25}>Done</Label></StatusCell>
      {[1, 2, 3, 4, 5, 6].map(n => <StatusCell key={n} w={21} />)}
      <StatusCell w={249}>
        <svg width="16" height="16" viewBox="0 0 16 16">
          <circle cx="8" cy="8" r="7.300" fill="#2566b4" />
          <path d="M3 3c3-2 6-2 7 0s-2 3-3 4-4 1-5 0zM8 9c2-1 5-1 5 1s-2 4-4 4-3-4-1-5z" fill="#58b848" />
          <path d="M3 3a7 7 0 0 1 6-2L5 5z" fill="#a8e0f0" />
        </svg>
        <Space w={3} />
        <Label w={147}>Internet | Protected Mode: On</Label>
      </StatusCell>
      <StatusCell w={34}>
        <svg width="18" height="16" viewBox="0 0 18 16">
          <path d="M3 9c0-5 7-7 10-3l-5 6z" fill="#f2f2f2" stroke="#a9a7a4" />
          <path d="M9.500 9V7a2.500 2.500 0 0 1 5 0v2M8.500 9h7v5h-7z" fill="#b9b7b4" stroke="#7c7a78" />
        </svg>
        <Space w={4} /><Arrow size={6} />
      </StatusCell>
      <StatusCell w={77}>
        <Space w={3} />
        <svg width="14" height="14" viewBox="0 0 14 14">
          <path d="M9 9l4 4" stroke="#9a8060" strokeWidth="2.200" />
          <circle cx="5.500" cy="5.500" r="4.500" fill="#d4e8fa" stroke="#5b8cc8" />
          <path d="M5.500 2.500v6M2.500 5.500h6" stroke="#1c54b0" strokeWidth="2" />
        </svg>
        <Space w={1} />
        <Label w={29}>100%</Label>
        <Space w={14} /><Arrow size={6} />
      </StatusCell>
      <svg width="12" height="17" viewBox="0 0 12 17">
        <path d="M1.500 17L12 6.500M5.500 17L12 10.500M9.500 17L12 14.500" stroke="#808080" strokeWidth="1.500" />
      </svg>
    </StatusBar>
    <Taskbar>
      <StartButton>
        <svg width="15" height="15" viewBox="0 0 15 15">
          <path d="M1 3c2-1.200 3.500-1.200 5.500-.2v4.700C4.500 6.700 3 6.700 1 7.700z" fill="#e4502c" />
          <path d="M7.500 3c2 1 3.500 1 6-.2v4.700c-2.500 1.200-4 1.200-6 .2z" fill="#6fb23c" />
          <path d="M1 8.700c2-1.200 3.500-1.200 5.500-.2V13c-2-1-3.500-1-5.500.2z" fill="#2a80d0" />
          <path d="M7.500 8.700c2 1 3.500 1 6-.2v4.700c-2.500 1.200-4 1.200-6 .2z" fill="#f5bc28" />
        </svg>
        <Label w={31}>Start</Label>
      </StartButton>
      <Space w={8} />
      <ActiveTask><IeIcon size={17} /></ActiveTask>
      <Space w={5} />
      <LibraryIcon />
      <Space w={18} />
      <svg width="16" height="16" viewBox="0 0 16 16">
        <path d="M1 2h13v11H1z" fill="#5a9fd4" stroke="#a8b8c4" />
        <circle cx="8" cy="8" r="5.500" fill="#f08418" stroke="#fbd3a0" />
        <path d="M6.300 4.800L11.500 8l-5.200 3.200z" fill="#fff" />
      </svg>
      <Space w={18} />
      <svg width="16" height="16" viewBox="0 0 16 16">
        <path d="M8 8L2 4.500A7 7 0 0 1 14 4.500z" fill="#dc4434" />
        <path d="M8 8L14 4.500A7 7 0 0 1 8 15z" fill="#f8cc38" />
        <path d="M8 8v7A7 7 0 0 1 2 4.500z" fill="#3d9c4c" />
        <circle cx="8" cy="8" r="3.200" fill="#3b7ce0" stroke="#fff" strokeWidth="1.200" />
      </svg>
      <Space w={18} />
      <svg width="16" height="16" viewBox="0 0 16 16">
        <circle cx="8" cy="8" r="7.300" fill="#c01c1c" />
        <ellipse cx="8" cy="8" rx="2.700" ry="4.500" fill="#f4ecec" />
        <path d="M7 4h2v8H7z" fill="#7c1010" />
      </svg>
      <Space grow />
      <Tray>
        <svg width="8" height="10" viewBox="0 0 8 10">
          <path d="M1.500 4L4 1.500 6.500 4M1.500 8L4 5.500 6.500 8" fill="none" stroke="#000" strokeWidth="1.300" />
        </svg>
        <Space w={9} />
        <svg width="17" height="16" viewBox="0 0 17 16">
          <path d="M5 3.500h10v8H5z" fill="#f4f4f4" stroke="#606060" />
          <path d="M1 1v4h4V1M3 5v9h4" fill="none" stroke="#505050" strokeWidth="1.200" />
          <path d="M11.500 6l4.500 9H7z" fill="#ffd71c" stroke="#9a7a00" strokeWidth=".7" />
          <path d="M11.500 9v3M11.500 13v1" stroke="#000" strokeWidth="1.200" />
        </svg>
        <Space w={7} />
        <svg width="17" height="16" viewBox="0 0 17 16">
          <path d="M1 5.500h2.500L8 1.500v13l-4.500-4H1z" fill="#f8f8f8" stroke="#707070" />
          <path d="M10 5.500q2 2.500 0 5M12 3.500q3.500 4.500 0 9M14 2q4.500 6 0 12" fill="none" stroke="#858585" />
        </svg>
        <Space w={7} />
        <svg width="17" height="16" viewBox="0 0 17 16">
          <path d="M2 1v14" stroke="#5d5d5d" strokeWidth="1.500" />
          <path d="M3 2h6l1 2h6l-2 3 1 2H9L8 8H3z" fill="#fafafa" stroke="#6c6c6c" />
        </svg>
        <Space w={15} />
        <Label w={41}>3:36 AM</Label>
        <Space w={9} />
        <ScreenIcon />
      </Tray>
    </Taskbar>
    <SaveDialog />
    <Watermark>
      <MarkText><span>ANY</span></MarkText>
      <svg width="60" height="62" viewBox="0 0 60 64">
        <path d="M5 9v50q0 3 3 3h6L54 35q2-2 0-4L15 4q-3-2-3 1v46l30-18-22-14v19" fill="none" stroke="#b9b9b9" strokeWidth="5" />
        <path d="M5 9v50q0 3 3 3h6L54 35q2-2 0-4L15 4q-3-2-3 1v46l30-18-22-14v19" fill="none" stroke="#f8f8f8" strokeWidth="3.500" />
      </svg>
      <Space w={3} />
      <MarkText><span>RUN</span></MarkText>
    </Watermark>
  </Desktop>
);

export default App;
